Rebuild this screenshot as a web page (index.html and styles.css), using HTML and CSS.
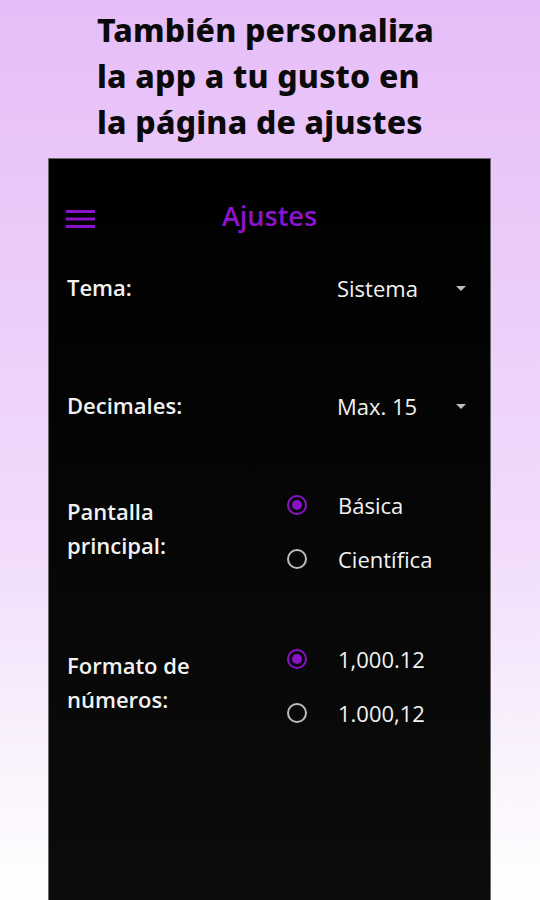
FILE: index.html
```html
<!DOCTYPE html>
<html lang="es">
<head>
  <meta charset="UTF-8" />
  <meta name="viewport" content="width=device-width, initial-scale=1.0" />
  <title>Ajustes</title>
  <link rel="stylesheet" href="styles.css">
</head>
<body>
  <!-- Promo heading -->
  <div class="promo">
    <h1>También personaliza<br>la app a tu gusto en<br>la página de ajustes</h1>
  </div>

  <!-- Phone screen -->
  <div class="phone">
    <div class="appbar">
      <svg class="menu" width="30" height="20" viewBox="0 0 30 20">
        <rect x="0" y="1" width="29" height="3" fill="#8a12c8"/>
        <rect x="0" y="8.5" width="29" height="3" fill="#8a12c8"/>
        <rect x="0" y="16" width="29" height="3" fill="#8a12c8"/>
      </svg>
      <div class="title">Ajustes</div>
    </div>

    <div class="settings">
      <div class="row row-tema">
        <div class="label">Tema:</div>
        <div class="dropdown">
          <span>Sistema</span>
          <span class="arrow"></span>
        </div>
      </div>

      <div class="row row-dec">
        <div class="label">Decimales:</div>
        <div class="dropdown">
          <span>Max. 15</span>
          <span class="arrow"></span>
        </div>
      </div>

      <div class="row row-pantalla">
        <div class="label">Pantalla<br>principal:</div>
        <div class="radios">
          <div class="option"><span class="radio checked"></span>Básica</div>
          <div class="option"><span class="radio"></span>Científica</div>
        </div>
      </div>

      <div class="row row-formato">
        <div class="label">Formato de<br>números:</div>
        <div class="radios">
          <div class="option"><span class="radio checked"></span>1,000.12</div>
          <div class="option"><span class="radio"></span>1.000,12</div>
        </div>
      </div>
    </div>
  </div>
</body>
</html>
```

FILE: styles.css
```css
body {
  margin: 0;
  height: 900px;
  overflow: hidden;
  background: linear-gradient(#e6bdf8 0%, #f1dcfb 60%, #fbf6fd 88%, #ffffff 100%);
  font-family: "Open Sans", "Noto Sans", sans-serif;
}

/* Promo heading */
.promo {
  height: 158px;
  padding-left: 97px;
  box-sizing: border-box;
  padding-top: 7px;
}
.promo h1 {
  margin: 0;
  font-family: "Noto Sans", sans-serif;
  font-size: 32px;
  font-weight: 800;
  line-height: 46px;
  letter-spacing: 0.2px;
  color: #0a0a0a;
}

/* Phone */
.phone {
  margin: 0 49px 0 48px;
  height: 742px;
  background: linear-gradient(#000000, #0c0c0c);
  border: 1px solid #6a6a6a;
  border-bottom: none;
  box-sizing: border-box;
  color: #f2f2f2;
}

.appbar {
  display: flex;
  align-items: center;
  height: 58px;
  margin-top: 30px;
  padding-left: 17px;
}
.appbar .menu {
  margin-top: 2px;
}
.appbar .title {
  flex: 1;
  text-align: center;
  margin-right: 47px;
  margin-bottom: 5px;
  font-size: 27px;
  font-weight: 600;
  color: #8c14cc;
}

.settings {
  padding: 0 25px 0 18px;
}
.row {
  display: grid;
  grid-template-columns: 220px 1fr;
  align-items: center;
  font-size: 22px;
  font-weight: 600;
}
.row-tema { height: 48px; margin-top: 17px; }
.row-dec { height: 48px; margin-top: 70px; }
.row-pantalla { height: 108px; margin-top: 48px; }
.row-formato { height: 108px; margin-top: 46px; }

.label {
  line-height: 34px;
  margin-bottom: 8px;
}
.row-tema .label, .row-dec .label {
  margin-bottom: 2px;
}

.dropdown {
  display: flex;
  align-items: center;
  justify-content: space-between;
  padding-left: 50px;
  font-weight: 500;
}
.arrow {
  width: 0;
  height: 0;
  border-left: 5px solid transparent;
  border-right: 5px solid transparent;
  border-top: 5px solid #bdbdbd;
  margin-right: -1px;
}

.radios {
  display: flex;
  flex-direction: column;
}
.option {
  display: flex;
  align-items: center;
  height: 54px;
  font-weight: 500;
}
.radio {
  width: 16px;
  height: 16px;
  border: 2px solid #bcbcbc;
  border-radius: 50%;
  margin-right: 31px;
  position: relative;
}
.radio.checked {
  border-color: #8a12c8;
}
.radio.checked::after {
  content: "";
  position: absolute;
  left: 3px;
  top: 3px;
  width: 10px;
  height: 10px;
  border-radius: 50%;
  background: #8a12c8;
}
```
